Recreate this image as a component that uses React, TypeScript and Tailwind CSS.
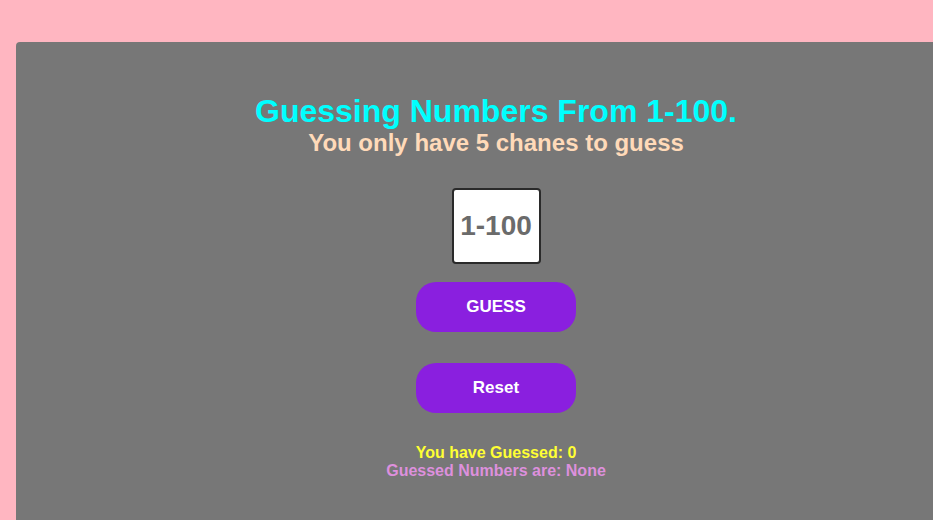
export default function App() {
  return (
    <div className="w-[933px] h-[520px] overflow-hidden bg-[#ffb6c1] pt-[42px] pl-4" style={{ fontFamily: '"Liberation Sans", Arial, sans-serif' }}>
      <div className="w-[960px] h-[600px] bg-[#777777] rounded-[4px] flex flex-col items-center pt-[50px]">
        <h1 className="text-[32px] leading-[38px] font-bold text-[#00ffff]">Guessing Numbers From 1-100.</h1>
        <h2 className="text-[24px] leading-[26px] font-bold text-[#ffdab9]">You only have 5 chanes to guess</h2>

        <input
          type="text"
          placeholder="1-100"
          className="mt-[32px] w-[89px] h-[76px] bg-white border-2 border-[#2a2a2a] rounded-[4px] text-center text-[28px] font-bold text-[#6b6b6b] placeholder:text-[#6b6b6b] outline-none"
        />

        <button className="mt-[18px] w-[160px] h-[50px] rounded-[20px] bg-[#8a1fdf] text-white font-bold text-[17px]">GUESS</button>
        <button className="mt-[31px] w-[160px] h-[50px] rounded-[20px] bg-[#8a1fdf] text-white font-bold text-[17px]">Reset</button>

        <div className="mt-[31px] flex flex-col items-center text-[16px] leading-[18px] font-bold">
          <p className="text-[#ffff33]">You have Guessed: 0</p>
          <p className="text-[#dd90dd]">Guessed Numbers are: None</p>
        </div>
      </div>
    </div>
  )
}
